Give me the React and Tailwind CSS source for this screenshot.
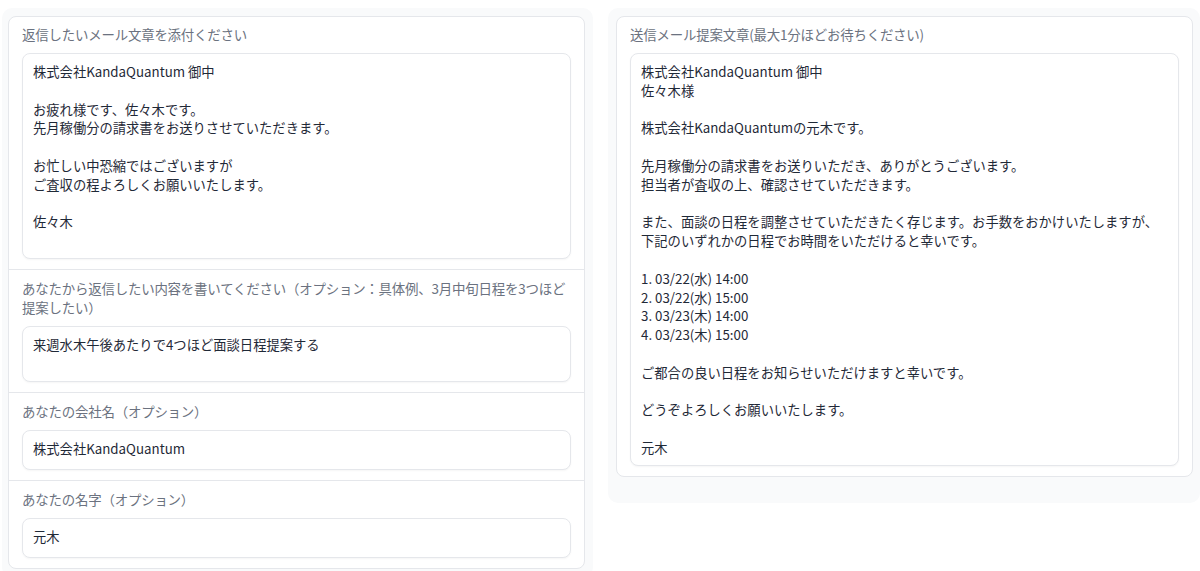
import React from 'react';

const font = { fontFamily: '"Noto Sans CJK JP", "Noto Sans", sans-serif' };

const Label = ({ children }) => (
  <div className="text-[13.45px] leading-[19px] text-[#6b7280] tracking-[-0.2px]">{children}</div>
);

const Box = ({ lines, h }) => (
  <div className={`mt-[9px] rounded-[8px] border border-[#e5e7eb] bg-white px-[10px] py-[9px] text-[13.3px] leading-[18.8px] text-[#1f2937] shadow-[0_1px_2px_rgba(0,0,0,0.04)] ${h}`}>
    {lines.map((l, i) => (
      <div key={i} className="h-[18.8px] whitespace-pre">{l}</div>
    ))}
  </div>
);

const Section = ({ label, lines, h, first }) => (
  <div className={`px-[13px] pb-[10px] ${first ? 'pt-[8px]' : 'border-t border-[#e5e7eb] pt-[9px]'}`}>
    <Label>{label}</Label>
    <Box lines={lines} h={h} />
  </div>
);

export default function App() {
  const src = [
    '株式会社KandaQuantum 御中',
    '',
    'お疲れ様です、佐々木です。',
    '先月稼働分の請求書をお送りさせていただきます。',
    '',
    'お忙しい中恐縮ではございますが',
    'ご査収の程よろしくお願いいたします。',
    '',
    '佐々木',
  ];
  const out = [
    '株式会社KandaQuantum 御中',
    '佐々木様',
    '',
    '株式会社KandaQuantumの元木です。',
    '',
    '先月稼働分の請求書をお送りいただき、ありがとうございます。',
    '担当者が査収の上、確認させていただきます。',
    '',
    'また、面談の日程を調整させていただきたく存じます。お手数をおかけいたしますが、',
    '下記のいずれかの日程でお時間をいただけると幸いです。',
    '',
    '1. 03/22(水) 14:00',
    '2. 03/22(水) 15:00',
    '3. 03/23(木) 14:00',
    '4. 03/23(木) 15:00',
    '',
    'ご都合の良い日程をお知らせいただけますと幸いです。',
    '',
    'どうぞよろしくお願いいたします。',
    '',
    '元木',
  ];
  return (
    <div className="flex h-[571px] w-[1200px] items-start gap-[15px] overflow-hidden bg-white pl-[2px] pt-[8px]" style={font}>
      <div className="w-[591px] shrink-0 rounded-[10px] bg-[#f9fafb] pb-[8px] pl-[6px] pr-[8px] pt-[8px]">
        <div className="overflow-hidden rounded-[8px] border border-[#e5e7eb] bg-white">
          <Section first label="返信したいメール文章を添付ください" lines={src} h="h-[206px]" />
          <Section label="あなたから返信したい内容を書いてください（オプション：具体例、3月中旬日程を3つほど提案したい）" lines={['来週水木午後あたりで4つほど面談日程提案する']} h="h-[56px]" />
          <Section label="あなたの会社名（オプション）" lines={['株式会社KandaQuantum']} h="h-[40px]" />
          <Section label="あなたの名字（オプション）" lines={['元木']} h="h-[40px]" />
        </div>
      </div>
      <div className="flex-1 rounded-[10px] bg-[#f9fafb] pb-[26px] pl-[8px] pr-[7px] pt-[8px]">
        <div className="rounded-[8px] border border-[#e5e7eb] bg-white">
          <Section first label="送信メール提案文章(最大1分ほどお待ちください)" lines={out} h="h-[413px]" />
        </div>
      </div>
    </div>
  );
}
